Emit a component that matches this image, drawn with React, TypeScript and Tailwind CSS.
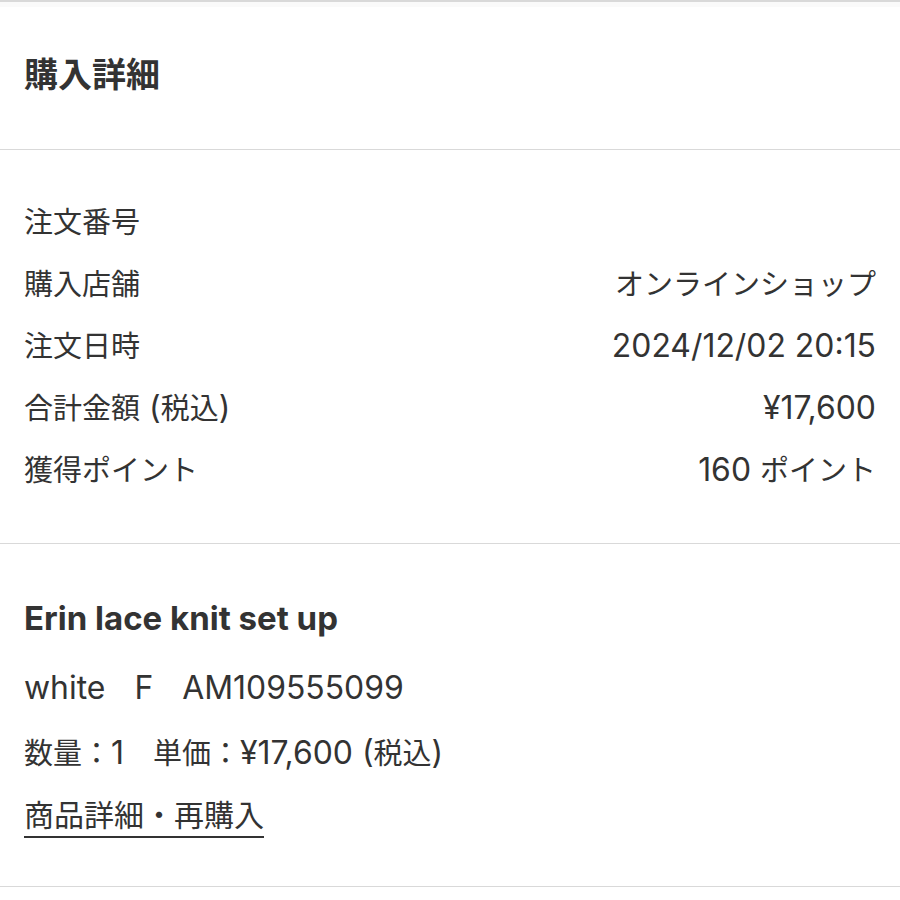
import React from "react";

function T({ s }: { s: string }) {
  const parts = s.match(/[\x20-\x7e¥]+|[^\x20-\x7e¥]+/g) || [];
  return (
    <>
      {parts.map((p, i) =>
        /[\x20-\x7e¥]/.test(p[0]) ? (
          <span key={i} className="text-[1.1em]">
            {p}
          </span>
        ) : (
          <React.Fragment key={i}>{p}</React.Fragment>
        )
      )}
    </>
  );
}

export default function App() {
  const rows: [string, string][] = [
    ["注文番号", ""],
    ["購入店舗", "オンラインショップ"],
    ["注文日時", "2024/12/02 20:15"],
    ["合計金額 (税込)", "¥17,600"],
    ["獲得ポイント", "160 ポイント"],
  ];
  return (
    <div
      className="w-[900px] h-[900px] bg-white text-[#333] overflow-hidden"
      style={{ fontFamily: '"Inter", "Noto Sans CJK JP", "Noto Sans", sans-serif' }}
    >
      <div className="h-[2px] bg-[#d9d9d9]" />
      <div className="h-[5px] bg-[#fafafa]" />
      <div className="h-[143px] pb-[6px] flex items-center px-6 border-b border-[#d9d9d9]">
        <h1 className="text-[34px] font-bold leading-none">購入詳細</h1>
      </div>
      <div className="pt-[51px] pb-[52px] px-6 border-b border-[#d9d9d9] flex flex-col gap-[20px]">
        {rows.map(([k, v]) => (
          <div key={k} className="flex justify-between items-center h-[42px] text-[29px] leading-none">
            <span>
              <T s={k} />
            </span>
            <span>
              <T s={v} />
            </span>
          </div>
        ))}
      </div>
      <div className="px-6 pt-[53px] pb-[48px] border-b border-[#d9d9d9] flex flex-col text-[29px]">
        <div className="font-bold leading-[42px] text-[30px]">
          <T s="Erin lace knit set up" />
        </div>
        <div className="mt-[27px] leading-[42px] whitespace-pre">
          <T s="white　F　AM109555099" />
        </div>
        <div className="mt-[22px] leading-[42px] whitespace-pre">
          <T s="数量：1　単価：¥17,600 (税込)" />
        </div>
        <div className="mt-[19px] flex">
          <span className="leading-[42px] text-[30px] border-b-2 border-[#333]">商品詳細・再購入</span>
        </div>
      </div>
    </div>
  );
}
